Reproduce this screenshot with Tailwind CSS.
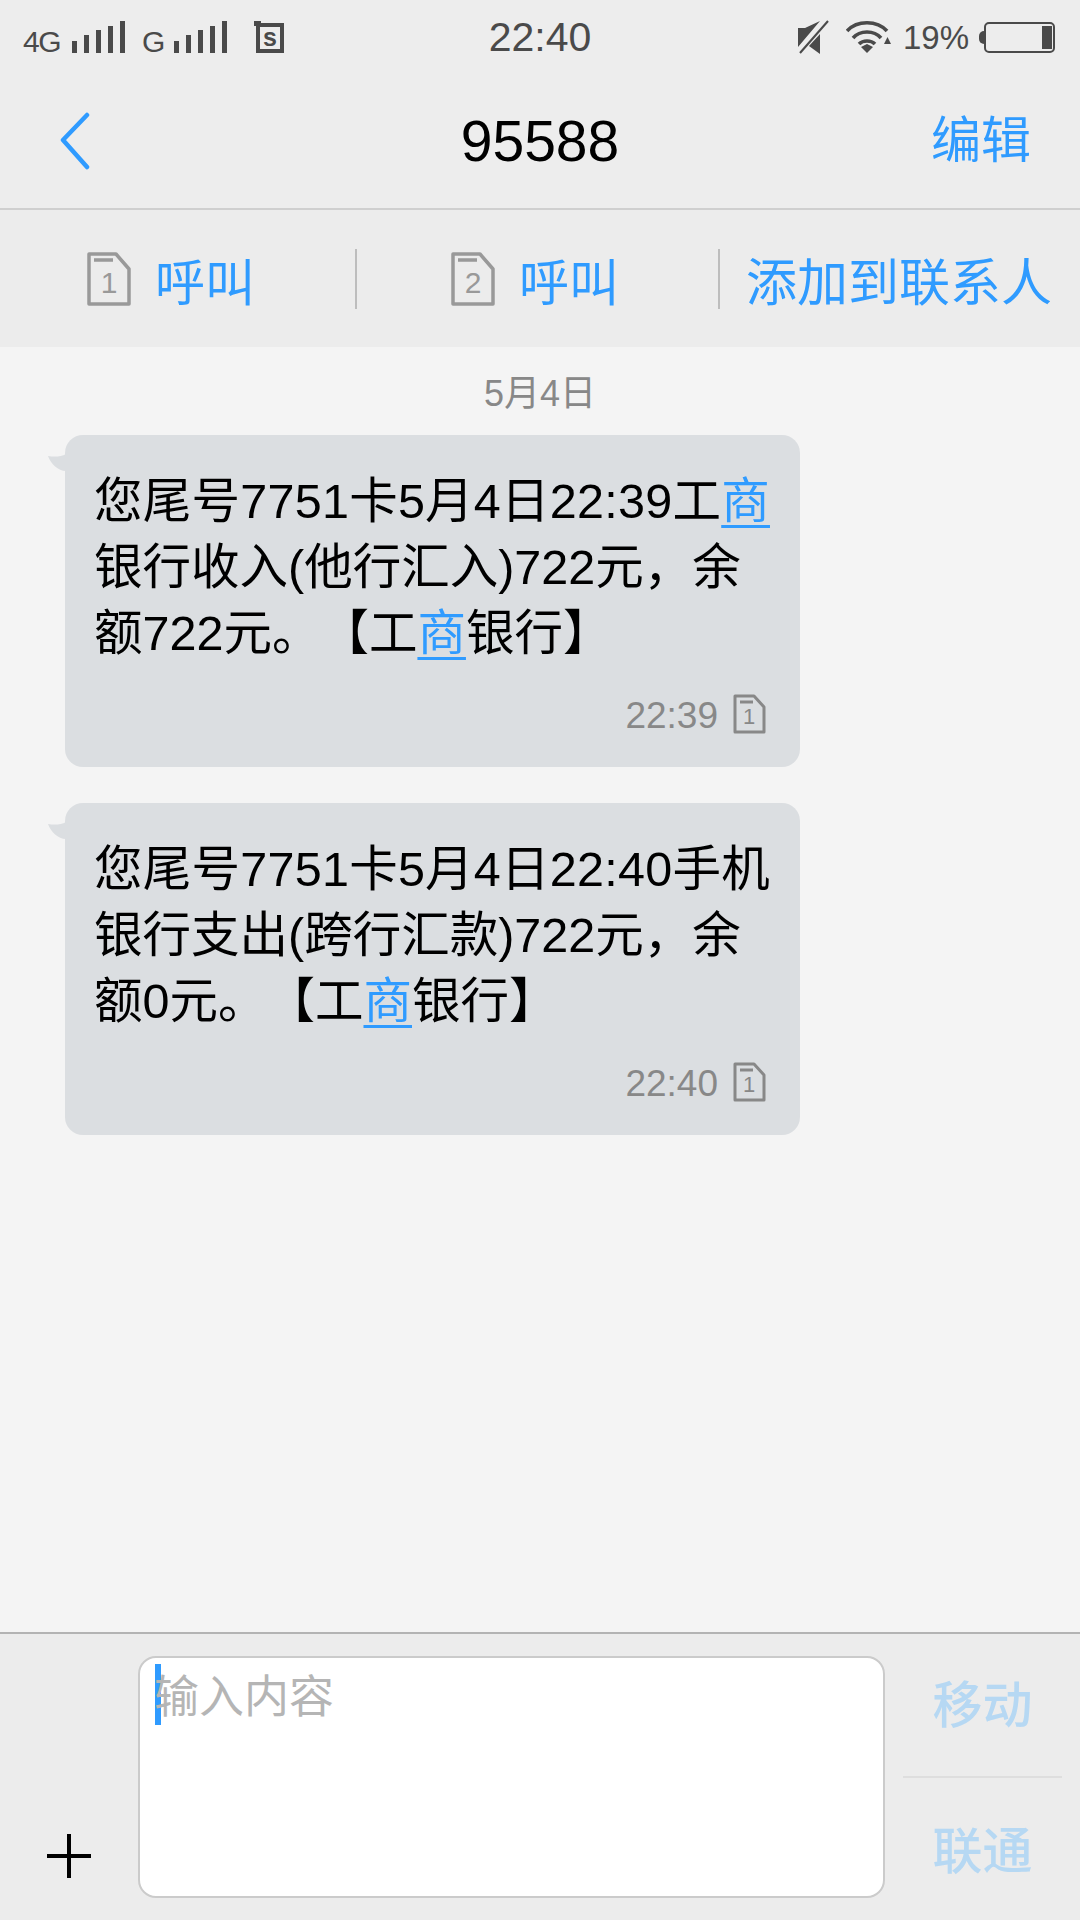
<!DOCTYPE html>
<html lang="zh-CN">
<head>
  <meta charset="UTF-8" />
  <title>95588</title>
  <script src="https://cdn.jsdelivr.net/npm/@tailwindcss/browser@4"></script>
</head>
<body class="bg-[#f4f4f4]">
  <div class="flex flex-col w-[1080px] h-[1920px] overflow-hidden font-['Liberation_Sans','Noto_Sans_CJK_SC',sans-serif]">

    <!-- status bar -->
    <div class="relative flex items-center h-[75px] shrink-0 bg-[#ededed] text-[#4a4a4a]">
      <span class="ml-[23px] w-[49px] text-[30px] leading-none tracking-[-1.5px] mt-[8px]">4G</span>
      <svg class="mt-[-1px]" width="53" height="32" viewBox="0 0 53 32" fill="#4a4a4a">
        <rect x="0" y="20" width="5" height="12"/><rect x="12" y="14" width="5" height="18"/><rect x="24" y="9" width="5" height="23"/><rect x="36" y="5" width="5" height="27"/><rect x="48" y="0" width="5" height="32"/>
      </svg>
      <span class="ml-[17px] w-[32px] text-[30px] leading-none mt-[8px]">G</span>
      <svg class="mt-[-1px]" width="53" height="32" viewBox="0 0 53 32" fill="#4a4a4a">
        <rect x="0" y="20" width="5" height="12"/><rect x="12" y="14" width="5" height="18"/><rect x="24" y="9" width="5" height="23"/><rect x="36" y="5" width="5" height="27"/><rect x="48" y="0" width="5" height="32"/>
      </svg>
      <div class="relative ml-[27px] mt-[-1px] w-[30px] h-[33px]">
        <div class="absolute left-[2px] top-[2px] w-[28px] h-[30px] border-[4px] border-[#4a4a4a]"></div>
        <div class="absolute left-0 top-0 w-[7px] h-[5px] bg-[#4a4a4a]"></div>
        <span class="absolute left-[2px] right-0 top-[2px] text-center text-[25px] font-bold leading-[28px]">s</span>
      </div>
      <span class="absolute left-0 right-0 top-[16px] text-center text-[41px] leading-[42px]">22:40</span>
      <svg class="ml-auto" width="32" height="35" viewBox="0 0 32 35" fill="#4a4a4a">
        <path d="M1 8H8L23 1 1 27Z M23 14V34L12 26Z"/>
        <path d="M3 33 31 1" stroke="#4a4a4a" stroke-width="2" fill="none"/>
      </svg>
      <svg class="ml-[17px]" width="45" height="35" viewBox="0 0 45 35" fill="none" stroke="#4a4a4a" stroke-width="3.6">
        <path d="M1 11C11 0 31 0 41 11"/>
        <path d="M7 18C14 10 28 10 35 18"/>
        <path d="M13 24C17 20 25 20 29 24"/>
        <path d="M15 27 21 33 27 27 21 24Z" fill="#4a4a4a" stroke="none"/>
        <path d="M38 24 41.500 17 45 24Z" fill="#4a4a4a" stroke="none"/>
      </svg>
      <span class="ml-[12px] text-[33px] leading-none">19%</span>
      <div class="ml-[10px] w-[5px] h-[13px] rounded-l-full bg-[#4a4a4a]"></div>
      <div class="flex justify-end items-center w-[71px] h-[31px] mr-[25px] border-[2px] border-[#4a4a4a] rounded-[5px] pr-[1px]">
        <div class="w-[10px] h-[23px] bg-[#4a4a4a]"></div>
      </div>
    </div>

    <!-- nav -->
    <div class="relative flex items-center justify-between h-[135px] shrink-0 bg-[#ededed] border-b-[2px] border-[#cfcfcf]">
      <svg class="ml-[60px] mt-[-1px]" width="30" height="58" viewBox="0 0 30 58" fill="none" stroke="#2f9bff" stroke-width="4.500" stroke-linecap="round" stroke-linejoin="round">
        <path d="M27 3 3 28 27 55"/>
      </svg>
      <span class="absolute left-0 right-0 text-center text-[57px] leading-none text-black mt-[-1px]">95588</span>
      <span class="mr-[49px] text-[50px] leading-none text-[#2f9bff] mt-[-2px]">编辑</span>
    </div>

    <!-- call actions -->
    <div class="flex items-center h-[137px] shrink-0 bg-[#ececec] text-[50px] leading-none text-[#2f9bff]">
      <div class="flex items-center w-[355px] gap-[24px] pl-[87px]">
        <svg width="44" height="54" viewBox="0 0 44 54" fill="none" stroke="#999" stroke-width="3.500">
          <path d="M2 2H29L42 17V52H2Z" stroke-linejoin="round"/>
          <path d="M7 8H26"/>
          <text x="22" y="41" font-size="30" fill="#999" stroke="none" text-anchor="middle">1</text>
        </svg>
        <span class="mt-[10px]">呼叫</span>
      </div>
      <div class="w-[2px] h-[60px] bg-[#bdbdbd]"></div>
      <div class="flex items-center w-[361px] gap-[24px] pl-[94px]">
        <svg width="44" height="54" viewBox="0 0 44 54" fill="none" stroke="#999" stroke-width="3.500">
          <path d="M2 2H29L42 17V52H2Z" stroke-linejoin="round"/>
          <path d="M7 8H26"/>
          <text x="22" y="41" font-size="30" fill="#999" stroke="none" text-anchor="middle">2</text>
        </svg>
        <span class="mt-[10px]">呼叫</span>
      </div>
      <div class="w-[2px] h-[60px] bg-[#bdbdbd]"></div>
      <span class="ml-[26px] mt-[10px] text-[51px] whitespace-nowrap">添加到联系人</span>
    </div>

    <!-- messages -->
    <div class="flex flex-col flex-1 bg-[#f4f4f4]">
      <div class="h-[88px] pt-[27px] text-center text-[36px] leading-[40px] text-[#888]">5月4日</div>

      <div class="relative ml-[65px] w-[735px] h-[332px] rounded-[18px] bg-[#dbdee1]">
        <svg class="absolute left-[-17px] top-[19px]" width="18" height="18" viewBox="0 0 18 18" fill="#dbdee1"><path d="M0 2C6 3 13 3 18 0V17C10 17 3 10 0 2Z"/></svg>
        <p class="pl-[29px] pt-[33px] text-[48.5px] leading-[66px] text-black whitespace-nowrap [text-spacing-trim:space-all]"><span class="tracking-[0.25px]">您尾号7751卡5月4日22:39工<span class="text-[#2f9bff] underline underline-offset-[7px] decoration-[3px]">商</span></span><br>银行收入(他行汇入)722元，余<br>额722元。【工<span class="text-[#2f9bff] underline underline-offset-[7px] decoration-[3px]">商</span>银行】</p>
        <div class="flex items-center justify-end gap-[15px] mt-[27px] pr-[34px] text-[37px] leading-none text-[#888]">
          <span class="mt-[4px]">22:39</span>
          <svg width="33" height="40" viewBox="0 0 33 40" fill="none" stroke="#888" stroke-width="3">
            <path d="M2 2H21L31 13V38H2Z" stroke-linejoin="round"/>
            <path d="M7 8H20"/>
            <text x="16" y="30" font-size="22" fill="#888" stroke="none" text-anchor="middle">1</text>
          </svg>
        </div>
      </div>

      <div class="relative ml-[65px] mt-[36px] w-[735px] h-[332px] rounded-[18px] bg-[#dbdee1]">
        <svg class="absolute left-[-17px] top-[19px]" width="18" height="18" viewBox="0 0 18 18" fill="#dbdee1"><path d="M0 2C6 3 13 3 18 0V17C10 17 3 10 0 2Z"/></svg>
        <p class="pl-[29px] pt-[33px] text-[48.5px] leading-[66px] text-black whitespace-nowrap [text-spacing-trim:space-all]"><span class="tracking-[0.25px]">您尾号7751卡5月4日22:40手机</span><br>银行支出(跨行汇款)722元，余<br>额0元。【工<span class="text-[#2f9bff] underline underline-offset-[7px] decoration-[3px]">商</span>银行】</p>
        <div class="flex items-center justify-end gap-[15px] mt-[27px] pr-[34px] text-[37px] leading-none text-[#888]">
          <span class="mt-[4px]">22:40</span>
          <svg width="33" height="40" viewBox="0 0 33 40" fill="none" stroke="#888" stroke-width="3">
            <path d="M2 2H21L31 13V38H2Z" stroke-linejoin="round"/>
            <path d="M7 8H20"/>
            <text x="16" y="30" font-size="22" fill="#888" stroke="none" text-anchor="middle">1</text>
          </svg>
        </div>
      </div>
    </div>

    <!-- composer -->
    <div class="flex h-[288px] shrink-0 bg-[#ececec] border-t-[2px] border-[#b3b3b3] pt-[22px]">
      <div class="flex items-end w-[138px] h-[242px] pb-[20px] pl-[47px]">
        <svg width="44" height="44" viewBox="0 0 44 44" fill="#000"><rect x="20" y="0" width="4" height="44"/><rect x="0" y="20" width="44" height="4"/></svg>
      </div>
      <div class="relative w-[747px] h-[242px] rounded-[18px] border-[2px] border-[#cbcbcb] bg-white">
        <div class="absolute left-[15px] top-[6px] w-[6px] h-[61px] bg-[#2f9bff]"></div>
        <span class="absolute left-[14px] top-[15px] text-[45px] leading-[50px] text-[#b5b5b5]">输入内容</span>
      </div>
      <div class="flex flex-col ml-[18px] w-[159px] h-[242px] text-[50px] leading-none text-[#b6d8f3] font-medium">
        <div class="flex items-center justify-center h-[122px] shrink-0 pb-[21px] border-b-[2px] border-[#dedede]">移动</div>
        <div class="flex items-center justify-center h-[120px] shrink-0 pt-[28px]">联通</div>
      </div>
    </div>
  </div>
</body>
</html>
